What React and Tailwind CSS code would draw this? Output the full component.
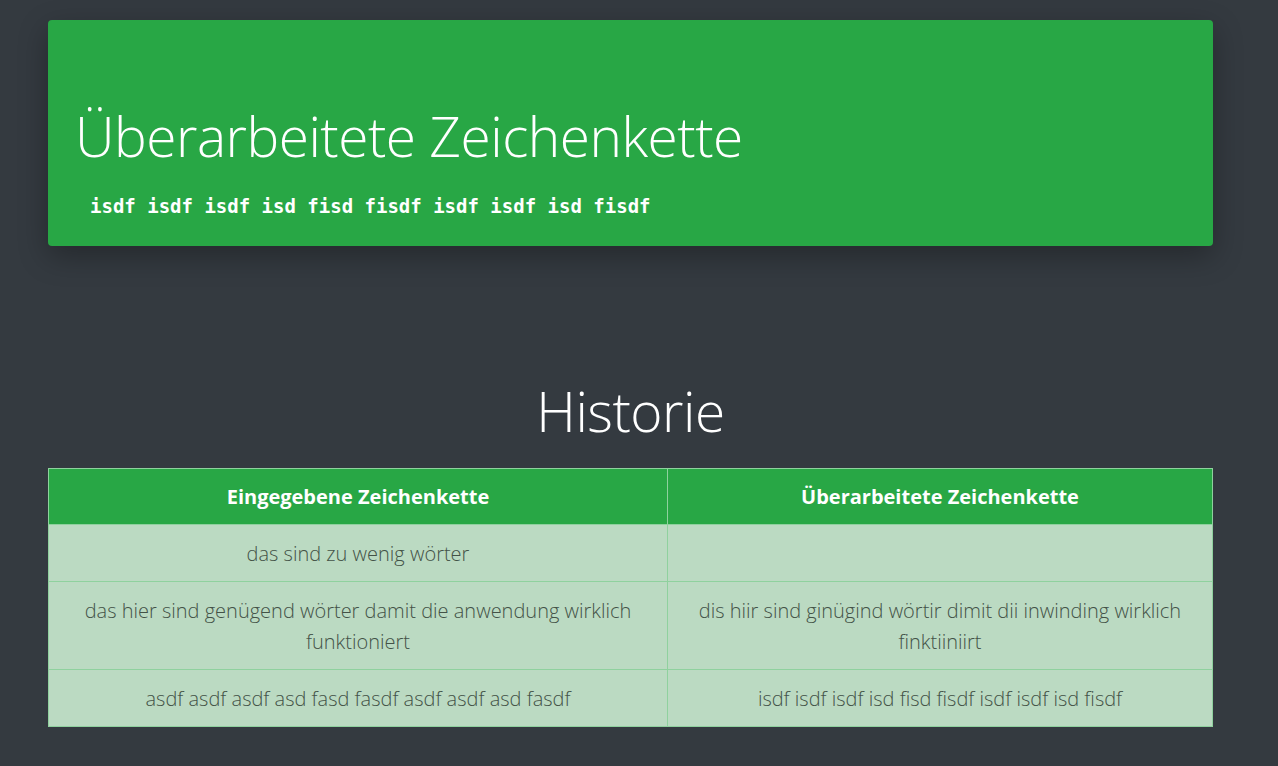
import React from 'react';

const rows = [
  { input: 'das sind zu wenig wörter', output: '' },
  {
    input: 'das hier sind genügend wörter damit die anwendung wirklich funktioniert',
    output: 'dis hiir sind ginügind wörtir dimit dii inwinding wirklich finktiiniirt',
  },
  {
    input: 'asdf asdf asdf asd fasd fasdf asdf asdf asd fasdf',
    output: 'isdf isdf isdf isd fisd fisdf isdf isdf isd fisdf',
  },
];

const App = () => {
  return (
    <div className="min-h-screen bg-[#343a40] font-['Open_Sans',sans-serif] pt-[20px] pb-10">
      <div className="ml-[48px] w-[1165px]">
        <div className="bg-[#28a745] rounded-[4px] shadow-[0_10px_30px_rgba(0,0,0,0.3)] h-[226px] pl-[27px] pt-[83px]">
          <h1 className="text-white font-light text-[55px] leading-[1.2] tracking-[-0.5px]">Überarbeitete Zeichenkette</h1>
          <p className="mt-[23px] ml-[15px] text-white font-bold text-[19px] font-['DejaVu_Sans_Mono',monospace]">
            isdf isdf isdf isd fisd fisdf isdf isdf isd fisdf
          </p>
        </div>

        <h2 className="mt-[132px] text-center text-white font-light text-[55px] leading-[1.2] tracking-[-0.5px]">Historie</h2>

        <table className="mt-[24px] w-full border-collapse text-center">
          <thead>
            <tr className="bg-[#28a745] text-white">
              <th className="border border-[#8fd19e] h-[56px] px-3 text-[20px] font-bold">Eingegebene Zeichenkette</th>
              <th className="border border-[#8fd19e] h-[56px] px-3 text-[20px] font-bold w-[545px]">Überarbeitete Zeichenkette</th>
            </tr>
          </thead>
          <tbody>
            {rows.map((r, i) => (
              <tr key={i} className="bg-[#bbdac2] text-[#435247]">
                <td className="border border-[#8fd19e] px-[12px] py-[12.5px] text-[20px] leading-[31px] font-light">{r.input}</td>
                <td className="border border-[#8fd19e] px-[28px] py-[12.5px] text-[20px] leading-[31px] font-light">{r.output}</td>
              </tr>
            ))}
          </tbody>
        </table>
      </div>
    </div>
  );
};

export default App;
